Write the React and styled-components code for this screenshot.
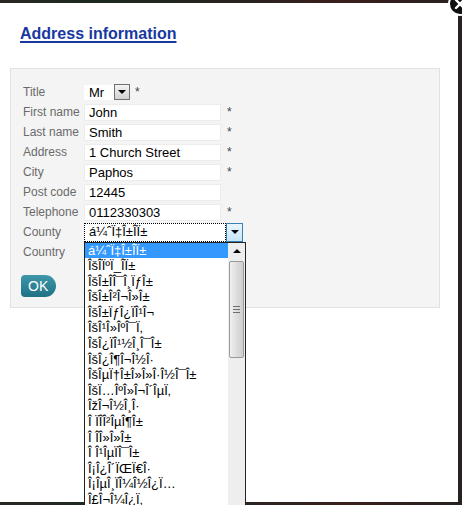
import React from "react";
import styled, { createGlobalStyle } from "styled-components";

const GlobalStyle = createGlobalStyle`
  html, body {
    margin: 0;
    padding: 0;
    background: #1f1f1f;
    font-family: "Liberation Sans", Arial, sans-serif;
    overflow: hidden;
  }
`;

const Page = styled.div`
  position: relative;
  width: 462px;
  height: 505px;
  padding-top: 3px;
  box-sizing: border-box;
  background: linear-gradient(90deg, #2a2622 0%, #1c2a22 20%, #2b2320 55%, #3a1e1c 75%, #262220 100%);
`;

const Modal = styled.div`
  position: relative;
  width: 458px;
  height: 499px;
  background: #fff;
  box-sizing: border-box;
  padding-top: 21px;
`;

const Close = styled.div`
  position: absolute;
  left: 447px;
  top: -9px;
  width: 26px;
  height: 26px;
`;

const Heading = styled.h2`
  margin: 0 0 25px 20px;
  font-size: 16px;
  line-height: 19px;
  font-weight: bold;
  color: #1738a0;
  text-decoration: underline;
  text-decoration-thickness: 2px;
  text-underline-offset: 2px;
`;

const Panel = styled.div`
  margin-left: 10px;
  width: 430px;
  height: 240px;
  box-sizing: border-box;
  background: #f4f4f4;
  border: 1px solid #e2e2e2;
  padding: 13px 10px 0 10px;
`;

const Row = styled.div`
  display: flex;
  align-items: center;
  height: 20px;
`;

const Label = styled.div`
  width: 61px;
  padding-left: 2px;
  font-size: 12px;
  color: #6a6a6a;
  white-space: nowrap;
`;

const Input = styled.div`
  width: 137px;
  height: 17px;
  box-sizing: border-box;
  background: #fff;
  border: 1px solid #ececec;
  padding-left: 4px;
  font-size: 13px;
  line-height: 15px;
  color: #000;
`;

const Star = styled.span`
  margin-left: ${(p) => p.$gap || 6}px;
  font-size: 12px;
  color: #444;
  align-self: flex-start;
  padding-top: 3px;
`;

const SmallSelect = styled.div`
  display: flex;
  align-items: center;
  width: 46px;
  height: 15px;
  background: #fff;
  font-size: 13px;
  color: #000;
  padding-left: 5px;
  box-sizing: border-box;
  justify-content: space-between;
`;

const SelectButton = styled.div`
  display: flex;
  align-items: center;
  justify-content: center;
  width: ${(p) => p.$w}px;
  height: ${(p) => p.$h}px;
  box-sizing: border-box;
  border: 1px solid ${(p) => (p.$active ? "#3c7fb1" : "#707070")};
  background: ${(p) =>
    p.$active
      ? "linear-gradient(#eaf6fd, #c6e6f8)"
      : "linear-gradient(#f4f4f4, #d2d2d2)"};
`;

const Arrow = styled.span`
  width: 0;
  height: 0;
  border-left: 4px solid transparent;
  border-right: 4px solid transparent;
  border-top: 4px solid #000;
  border-bottom: ${(p) => (p.$up ? "4px solid #000" : "0")};
  ${(p) => p.$up && "border-top: 0;"}
`;

const CountyWrap = styled.div`
  position: relative;
`;

const CountySelect = styled.div`
  display: flex;
  width: 159px;
  height: 19px;
  background: #fff;
`;

const CountyValue = styled.div`
  flex: 1;
  box-sizing: border-box;
  border: 1px dotted #000;
  padding-left: 4px;
  font-size: 13px;
  line-height: 16px;
  color: #000;
`;

const DropList = styled.div`
  position: absolute;
  left: 0;
  top: 19px;
  width: 162px;
  height: 275px;
  box-sizing: border-box;
  border: 1px solid #222;
  border-bottom: 0;
  background: #fff;
  display: flex;
  z-index: 5;
`;

const Options = styled.div`
  flex: 1;
  overflow: hidden;
`;

const Option = styled.div`
  height: 15.6px;
  line-height: 15.6px;
  padding-left: 3px;
  font-size: 13px;
  white-space: nowrap;
  color: ${(p) => (p.$selected ? "#fff" : "#000")};
  background: ${(p) => (p.$selected ? "#3399ff" : "transparent")};
`;

const Scrollbar = styled.div`
  width: 17px;
  background: #eeeeee;
  display: flex;
  flex-direction: column;
  align-items: center;
`;

const ScrollUp = styled.div`
  height: 17px;
  display: flex;
  align-items: center;
  justify-content: center;
  width: 100%;
`;

const Thumb = styled.div`
  margin-top: 1px;
  width: 15px;
  height: 97px;
  box-sizing: border-box;
  border: 1px solid #9a9a9a;
  border-radius: 2px;
  background: linear-gradient(90deg, #f0f0f0, #dadada 60%, #cfcfcf);
  display: flex;
  flex-direction: column;
  align-items: center;
  justify-content: center;
  gap: 2px;
`;

const Grip = styled.div`
  width: 7px;
  height: 1px;
  background: #6d6d6d;
`;

const OkButton = styled.div`
  margin-top: 13px;
  width: 35px;
  height: 22px;
  box-sizing: border-box;
  padding-left: 7px;
  border-radius: 4px 11px 11px 4px;
  background: linear-gradient(#3f97aa, #1f7184);
  color: #fff;
  font-size: 14px;
  line-height: 22px;
`;

const fields = [
  { label: "First name", value: "John", required: true },
  { label: "Last name", value: "Smith", required: true },
  { label: "Address", value: "1 Church Street", required: true },
  { label: "City", value: "Paphos", required: true },
  { label: "Post code", value: "12445" },
  { label: "Telephone", value: "0112330303", required: true },
];

const counties = [
  "á¼ˆÏ‡Î±ÎÏ±",
  "ÎšÎÏºÏ_ÎÏ±",
  "ÎšÎ±ÎÎ¯Î¸ÏƒÎ±",
  "ÎšÎ±Î²Î¬Î»Î±",
  "ÎšÎ±ÏƒÎ¿ÏÎ¹Î¬",
  "ÎšÎ¹Î»ÎºÎ¯Ï‚",
  "ÎšÎ¿ÏÎ¹½Î¸Î¯Î±",
  "ÎšÎ¿Î¶Î¬Î½Î·",
  "ÎšÎµÏ†Î±Î»Î»Î·Î½Î¯Î±",
  "ÎšÏ…ÎºÎ»Î¬Î´ÎµÏ‚",
  "ÎžÎ¬Î½Î¸Î·",
  "Î ÏÎ­Î²ÎµÎ¶Î±",
  "Î Î­Î»Î»Î±",
  "Î Î¹ÎµÏÎ¯Î±",
  "Î¡Î¿Î´ÏŒÏ€Î·",
  "Î¡ÎµÎ¸ÏÎ¼Î½Î¿Ï…",
  "Î£Î¬Î¼Î¿Ï‚",
  "Î£ÎµÏÏÎ½",
];

export default function App() {
  return (
    <>
      <GlobalStyle />
      <Page>
        <Modal>
          <Heading>Address information</Heading>
          <Panel>
            <Row>
              <Label>Title</Label>
              <SmallSelect>
                Mr
                <SelectButton $w={16} $h={16}>
                  <Arrow />
                </SelectButton>
              </SmallSelect>
              <Star $gap={5}>*</Star>
            </Row>
            {fields.map((f) => (
              <Row key={f.label}>
                <Label>{f.label}</Label>
                <Input>{f.value}</Input>
                {f.required && <Star>*</Star>}
              </Row>
            ))}
            <Row>
              <Label>County</Label>
              <CountyWrap>
                <CountySelect>
                  <CountyValue>{counties[0]}</CountyValue>
                  <SelectButton $w={17} $h={19} $active>
                    <Arrow />
                  </SelectButton>
                </CountySelect>
                <DropList>
                  <Options>
                    {counties.map((c, i) => (
                      <Option key={c} $selected={i === 0}>
                        {c}
                      </Option>
                    ))}
                  </Options>
                  <Scrollbar>
                    <ScrollUp>
                      <Arrow $up />
                    </ScrollUp>
                    <Thumb>
                      <Grip />
                      <Grip />
                      <Grip />
                    </Thumb>
                  </Scrollbar>
                </DropList>
              </CountyWrap>
            </Row>
            <Row>
              <Label>Country</Label>
            </Row>
            <OkButton>OK</OkButton>
          </Panel>
        </Modal>
        <Close>
          <svg width="26" height="26" viewBox="0 0 26 26">
            <circle cx="13" cy="13" r="11" fill="#111" stroke="#fff" strokeWidth="2" />
            <path d="M9 9 L17 17 M17 9 L9 17" stroke="#fff" strokeWidth="2.4" strokeLinecap="round" />
          </svg>
        </Close>
      </Page>
    </>
  );
}
